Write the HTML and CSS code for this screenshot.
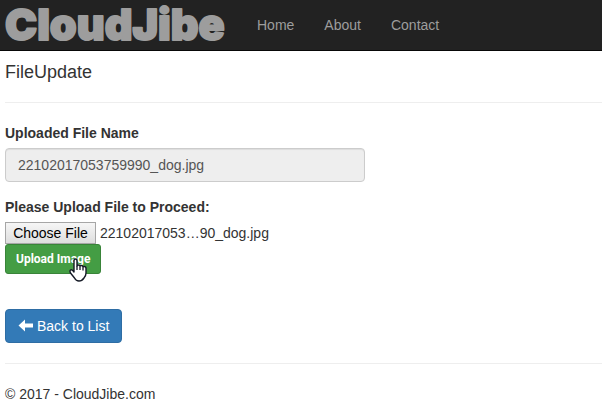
FILE: index.html
```html
<!DOCTYPE html>
<html lang="en">
<head>
<meta charset="utf-8">
<title>FileUpdate - CloudJibe</title>
<link rel="stylesheet" href="styles.css">
</head>
<body>
<nav class="navbar">
  <a class="brand" href="#" aria-label="CloudJibe">
    <svg width="224" height="50" viewBox="0 0 224 50"><text x="0" y="40">CloudJibe</text></svg>
  </a>
  <ul class="nav-links">
    <li><a href="#">Home</a></li>
    <li><a href="#">About</a></li>
    <li><a href="#">Contact</a></li>
  </ul>
</nav>
<div class="content">
  <main>
    <h4 class="title">FileUpdate</h4>
    <hr class="rule">
    <form>
      <div class="form-group">
        <label for="file-name">Uploaded File Name</label>
        <input class="form-control" id="file-name" type="text" value="22102017053759990_dog.jpg" readonly>
      </div>
      <label for="file">Please Upload File to Proceed:</label>
      <div class="file-row">
        <input class="file-input" id="file" type="file">
        <span>22102017053…90_dog.jpg</span>
      </div>
      <div class="upload">
        <button class="btn btn-success" type="submit">Upload Image</button>
        <svg class="pointer" width="18" height="24" viewBox="0 0 18 24" aria-hidden="true">
          <path d="M5 14V3Q5 1 6.500 1Q8 1 8 3V8Q8 7 9.500 7Q11 7 11 8.500Q11 7.500 12.500 7.500Q14 7.500 14 9.500Q14 8.500 15.300 8.500Q17 8.500 17 10.500V15Q17 18 15 20V20Q13 23 10 23Q7 23 5.500 20L1.500 15Q0.500 13 1.500 12Q3 11 5 14Z" fill="#fff" stroke="#151a26" stroke-width="1.400" stroke-linejoin="round"/>
          <path d="M8 8V12M11 9V12M14 10V12.500" stroke="#151a26" stroke-width="1.300"/>
        </svg>
      </div>
    </form>
    <a class="btn btn-primary" href="#">
      <svg width="16" height="14" viewBox="0 0 16 14" aria-hidden="true"><path d="M0.500 6.500L7 0.500V4.500H15V8.500H7V12.500Z" fill="#fff"/></svg>
      <span>Back to List</span>
    </a>
  </main>
  <hr class="rule">
  <footer>© 2017 - CloudJibe.com</footer>
</div>
</body>
</html>
```
FILE: styles.css
```css
* { box-sizing: border-box; }
body {
  margin: 0;
  background: #fff;
  color: #333;
  font: 14px/20px "Liberation Sans", Arial, sans-serif;
}
.navbar {
  display: flex;
  align-items: center;
  gap: 13px;
  padding: 0 5px;
  background: #222;
  border-bottom: 1px solid #080808;
}
.brand svg { display: block; overflow: visible; }
.brand text {
  fill: #9d9d9d;
  stroke: #9d9d9d;
  stroke-width: 2px;
  stroke-linejoin: round;
  font: 900 43px Inter, sans-serif;
}
.nav-links {
  display: flex;
  margin: 0 -5px 0 0;
  padding: 0;
  list-style: none;
}
.nav-links a {
  display: block;
  padding: 15px;
  color: #9d9d9d;
  text-decoration: none;
}
.content { padding-left: 5px; }
.title {
  margin: 0;
  padding-top: 11px;
  font-size: 18px;
  font-weight: 400;
  line-height: 20px;
}
.rule {
  margin: 20px 0;
  border: 0;
  border-top: 1px solid #eee;
}
.form-group { margin-bottom: 15px; }
label {
  display: block;
  margin-bottom: 5px;
  font-weight: 700;
}
.form-control {
  display: block;
  width: 100%;
  max-width: 360px;
  height: 34px;
  padding: 6px 12px;
  border: 1px solid #ccc;
  border-radius: 4px;
  background: #eee;
  box-shadow: inset 0 1px 1px rgba(0, 0, 0, .075);
  color: #555;
  font: inherit;
}
.file-row {
  display: flex;
  align-items: center;
  gap: 4px;
}
.file-input {
  width: 91px;
  height: 22px;
  overflow: hidden;
  font: inherit;
}
.file-input::file-selector-button {
  width: 91px;
  height: 22px;
  margin: 0;
  padding: 0;
  border: 1px solid #a6a6a6;
  border-radius: 0;
  background: linear-gradient(#f6f6f6, #dedede);
  color: #000;
  font: inherit;
}
.btn {
  display: inline-flex;
  align-items: center;
  border: 1px solid;
  color: #fff;
  text-decoration: none;
}
.btn-success {
  padding: 5px 10px;
  border-color: #398439;
  border-radius: 3px;
  background: #449d44;
  font: 700 12px/18px Roboto, Arial, sans-serif;
}
.upload {
  display: flex;
  position: relative;
  margin-bottom: 35px;
}
.pointer {
  position: absolute;
  left: 64px;
  top: 14px;
}
.btn-primary {
  gap: 3px;
  padding: 6px 12px;
  border-color: #2e6da4;
  border-radius: 4px;
  background: #337ab7;
}
main { display: flow-root; }
main > .btn { vertical-align: top; }
```
